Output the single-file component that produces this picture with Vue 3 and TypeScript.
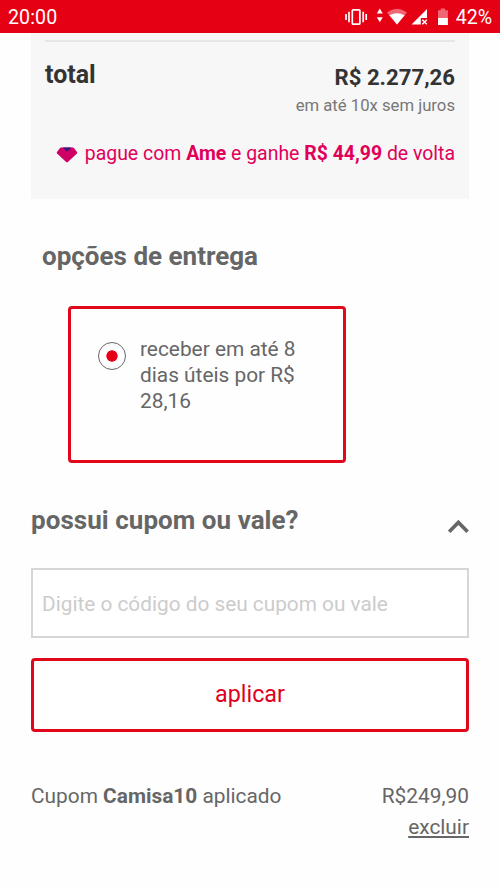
<script setup lang="ts">
import { ref } from 'vue'

interface Coupon {
  name: string
  discount: string
}

const code = ref('')
const open = ref(true)
const delivery = ref('standard')
const coupons = ref<Coupon[]>([{ name: 'Camisa10', discount: 'R$249,90' }])

function remove(name: string): void {
  coupons.value = coupons.value.filter((c) => c.name !== name)
}
</script>

<template>
  <div class="screen">
    <header class="status">
      <span class="clock">20:00</span>
      <svg class="status-icons" width="106" height="33" viewBox="0 0 106 33" aria-hidden="true">
        <g fill="none" stroke="#fff" stroke-width="1.7">
          <rect x="8.3" y="9.8" width="7.6" height="14.4" rx="1" />
          <path d="M5 11.8v10.4M19.2 11.8v10.4M2 14v6M22.2 14v6" />
        </g>
        <path d="M35.8 8.5l3 5h-6zM35.8 22.2l3-5h-6z" fill="#fff" />
        <path d="M43 12.4Q53 5.200 63 12.400L53 24.600z" fill="#fff" opacity=".4" />
        <path d="M45.400 15.200Q53 11.400 60.600 15.200L53 24.600z" fill="#fff" />
        <path d="M67.500 24.400L83 9v8.900H76.800v6.500z" fill="#fff" />
        <path d="M78.300 19.800l4.500 4.500M82.800 19.800L78.300 24.300" stroke="#fff" stroke-width="1.500" />
        <path d="M94 10.200h2.700V8.400h4.400v1.800h2.800V18H94z" fill="#fff" opacity=".4" />
        <path d="M94 18h9.900v7H94z" fill="#fff" />
      </svg>
      <span class="battery">42%</span>
    </header>

    <main>
      <section class="summary">
        <div class="total">
          <strong class="total-label">total</strong>
          <div class="total-value">
            <strong class="price">R$ 2.277,26</strong>
            <span class="installments">em até 10x sem juros</span>
          </div>
        </div>
        <p class="cashback">
          <svg width="22" height="16" viewBox="0 0 22 16" aria-hidden="true">
            <path d="M5.2 .5h11.600q.7 0 1.200.6l3 3.800q.6.800-.1 1.500l-9 8.500q-.9.800-1.800 0l-9-8.500q-.7-.7-.1-1.500L4 1.100Q4.500.5 5.200.5z" fill="#ce0064" />
            <path d="M6.600.5h8.800L11 4.700z" fill="#34197c" />
          </svg>
          <span>pague com <b>Ame</b> e ganhe <b>R$ 44,99</b> de volta</span>
        </p>
      </section>

      <h2 class="delivery-title">opções de entrega</h2>
      <label class="option">
        <input v-model="delivery" class="radio" type="radio" value="standard" />
        <span class="option-text">receber em até 8 dias úteis por R$ 28,16</span>
      </label>

      <section class="voucher">
        <div class="voucher-head" @click="open = !open">
          <h2>possui cupom ou vale?</h2>
          <svg :class="{ closed: !open }" width="22" height="16" viewBox="0 0 22 16" aria-hidden="true">
            <path d="M2.200 12.800L11.400 3.400 20.600 12.800" fill="none" stroke="#666" stroke-width="3.600" />
          </svg>
        </div>
        <form v-if="open" @submit.prevent>
          <input v-model="code" class="code" type="text" placeholder="Digite o código do seu cupom ou vale" />
          <button class="apply" type="submit">aplicar</button>
        </form>
        <div v-for="c in coupons" :key="c.name" class="applied">
          <span class="applied-name">Cupom <b>{{ c.name }}</b> aplicado</span>
          <div class="applied-side">
            <span class="discount">{{ c.discount }}</span>
            <a class="remove" @click="remove(c.name)">excluir</a>
          </div>
        </div>
      </section>
    </main>
  </div>
</template>

<style>
body {
  margin: 0;
  background: #fff;
}
</style>

<style scoped>
.screen {
  box-sizing: border-box;
  width: 500px;
  height: 889px;
  overflow: hidden;
  background: #fefefe;
  color: #666;
  font-family: Roboto, 'Liberation Sans', sans-serif;
  font-size: 20.85px;
  white-space: nowrap;
}
.status {
  display: flex;
  align-items: center;
  box-sizing: border-box;
  height: 33px;
  padding: 0 8px;
  background: #e60014;
  color: #fff;
  font-size: 19.6px;
  line-height: 35px;
}
.clock {
  padding-top: 2px;
  letter-spacing: 0.1px;
}
.battery {
  padding-top: 2px;
}
.status-icons {
  margin: 0 6px 0 auto;
}
main {
  padding: 0 31px;
}
.summary {
  box-sizing: border-box;
  height: 166px;
  padding: 7px 14px 0;
  background: #f7f7f7;
}
.total {
  display: flex;
  justify-content: space-between;
  border-top: 2px solid #e6e6e6;
  color: #333;
}
.total-label {
  padding-top: 18px;
  font-size: 25px;
  line-height: 30px;
}
.total-value {
  display: flex;
  flex-direction: column;
  align-items: flex-end;
  padding-top: 21px;
}
.price {
  font-size: 22.15px;
  line-height: 28px;
}
.installments {
  color: #777;
  font-size: 16.7px;
  line-height: 30px;
}
.cashback {
  display: flex;
  align-items: center;
  justify-content: flex-end;
  gap: 7px;
  margin: 18px 0 0;
  color: #e0005a;
  font-size: 19.46px;
  line-height: 30px;
}
.cashback svg {
  margin-top: 2px;
}
h2 {
  margin: 0;
  font-size: 26px;
  line-height: 32px;
  font-weight: 700;
}
.delivery-title {
  margin: 41px 0 0 11px;
}
.option {
  display: flex;
  align-items: flex-start;
  gap: 14px;
  box-sizing: border-box;
  width: 278px;
  height: 157px;
  margin: 34px 0 0 37px;
  padding: 27px;
  border: 3px solid #e0081a;
  border-radius: 4px;
}
.radio {
  appearance: none;
  flex: none;
  width: 28px;
  height: 28px;
  margin: 6px 0 0;
  border: 1.5px solid #666;
  border-radius: 50%;
  background: radial-gradient(circle, #e60014 5.3px, transparent 6px);
}
.option-text {
  width: 165px;
  line-height: 26px;
  white-space: normal;
}
.voucher {
  margin-top: 41px;
}
.voucher-head {
  display: flex;
  align-items: flex-start;
  justify-content: space-between;
}
.voucher-head h2 {
  letter-spacing: 0.04px;
}
.voucher-head svg {
  margin-top: 15px;
}
.closed {
  transform: rotate(180deg);
}
form {
  display: flex;
  flex-direction: column;
  gap: 20px;
  padding-top: 32px;
}
.code,
.apply {
  box-sizing: border-box;
  width: 438px;
  margin: 0;
  background: #fff;
  font-family: inherit;
}
.code {
  height: 70px;
  padding: 2px 9px 0;
  border: 2px solid #d6d6d6;
  border-radius: 0;
  color: #666;
  font-size: 20.8px;
}
.code::placeholder {
  color: #ccc;
  opacity: 1;
}
.apply {
  height: 74px;
  padding: 0 0 2px;
  border: 3px solid #e0081a;
  border-radius: 4px;
  color: #e00020;
  font-size: 23.3px;
}
.applied {
  display: flex;
  justify-content: space-between;
  margin-top: 49px;
  line-height: 31px;
}
.applied-side {
  display: flex;
  flex-direction: column;
  align-items: flex-end;
}
.remove {
  text-decoration: underline;
  cursor: pointer;
}
</style>
